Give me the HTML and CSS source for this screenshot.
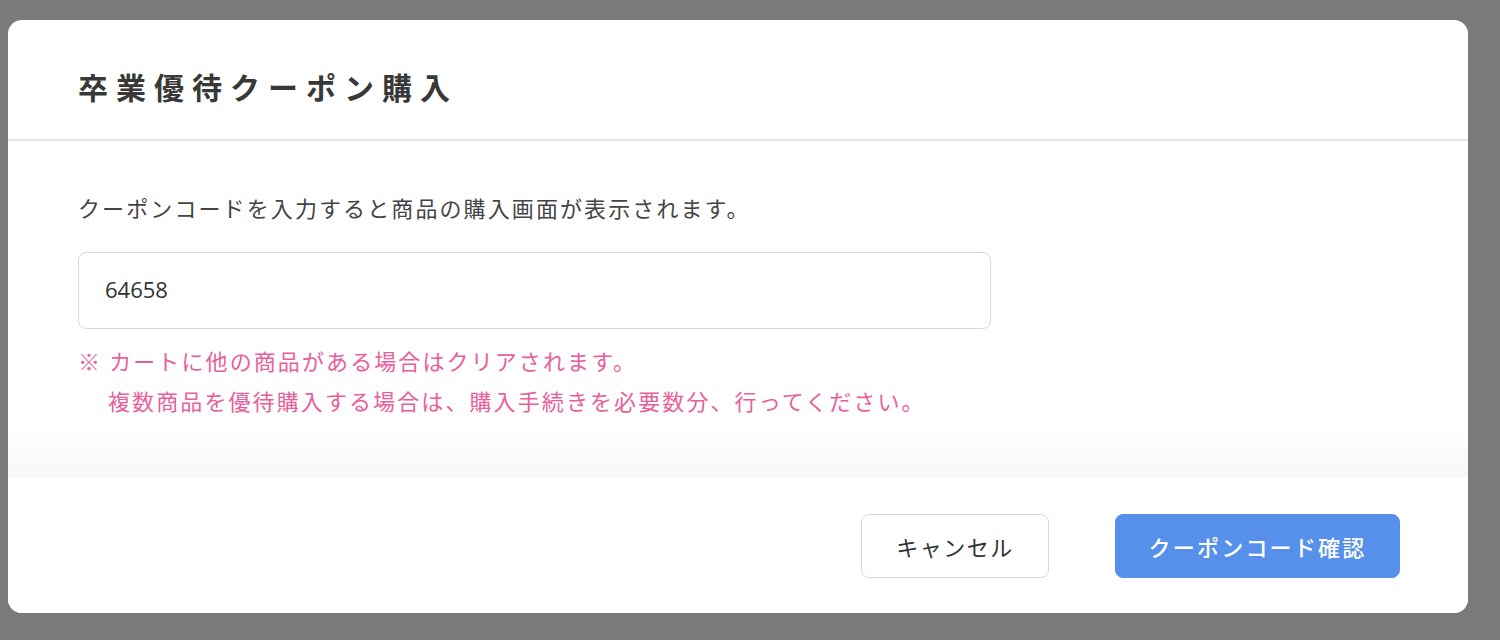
FILE: index.html
```html
<!DOCTYPE html>
<html lang="ja">
<head>
<meta charset="utf-8">
<link rel="stylesheet" href="styles.css">
</head>
<body>
<div class="overlay">
  <div class="modal">
    <div class="modal-header">
      <h1 class="title">卒業優待クーポン購入</h1>
    </div>
    <div class="modal-body">
      <p class="desc">クーポンコードを入力すると商品の購入画面が表示されます。</p>
      <div class="input">64658</div>
      <div class="notes">
        <p class="note">※ カートに他の商品がある場合はクリアされます。</p>
        <p class="note indent">複数商品を優待購入する場合は、購入手続きを必要数分、行ってください。</p>
      </div>
    </div>
    <div class="modal-footer">
      <button class="btn btn-cancel">キャンセル</button>
      <button class="btn btn-primary">クーポンコード確認</button>
    </div>
  </div>
</div>
</body>
</html>
```

FILE: styles.css
```css
* { box-sizing: border-box; }
html, body { margin: 0; padding: 0; }
body {
  font-family: "Noto Sans CJK JP", "Noto Sans", sans-serif;
  background: #7a7a7a;
  width: 1500px;
  height: 640px;
  overflow: hidden;
}
.overlay {
  padding: 20px 32px 27px 8px;
  height: 640px;
}
.modal {
  height: 593px;
  background: #fff;
  border-radius: 14px;
  display: flex;
  flex-direction: column;
  overflow: hidden;
}
.modal-header {
  height: 121px;
  border-bottom: 2px solid #e6e6e6;
  display: flex;
  align-items: center;
  padding-left: 70px;
  padding-top: 12px;
}
.title {
  margin: 0;
  font-size: 30px;
  font-weight: 600;
  letter-spacing: 8px;
  color: #383838;
  line-height: 40px;
}
.modal-body {
  flex: 1;
  padding: 50px 70px 0;
  background: linear-gradient(to bottom, #fff 0, #fff 285px, #f6f7f7 100%);
}
.desc {
  margin: 0;
  font-size: 22px;
  letter-spacing: 2.1px;
  line-height: 32px;
  color: #444;
}
.input {
  margin-top: 29px;
  width: 913px;
  height: 77px;
  border: 1px solid #d9d9d9;
  border-radius: 8px;
  padding-left: 26px;
  padding-bottom: 3px;
  display: flex;
  align-items: center;
  font-family: "Open Sans", "Noto Sans", sans-serif;
  font-size: 22px;
  color: #333;
}
.notes { margin-top: 11px; }
.note {
  margin: 0;
  font-size: 22px;
  letter-spacing: 2.1px;
  line-height: 40px;
  color: #e8609a;
}
.indent { padding-left: 30px; }
.modal-footer {
  height: 135px;
  display: flex;
  justify-content: flex-end;
  align-items: flex-start;
  gap: 66px;
  padding: 36px 68px 0 0;
  background: #fff;
}
.btn {
  height: 64px;
  border-radius: 8px;
  font-family: "Noto Sans CJK JP", "Noto Sans", sans-serif;
  font-size: 22px;
  cursor: pointer;
}
.btn-cancel {
  width: 188px;
  background: #fff;
  border: 1px solid #d8d8d8;
  color: #333;
  letter-spacing: 1.5px;
}
.btn-primary {
  width: 285px;
  background: #5690ea;
  border: 1px solid #5690ea;
  color: #fff;
  font-weight: 500;
  letter-spacing: 2.2px;
}
```
